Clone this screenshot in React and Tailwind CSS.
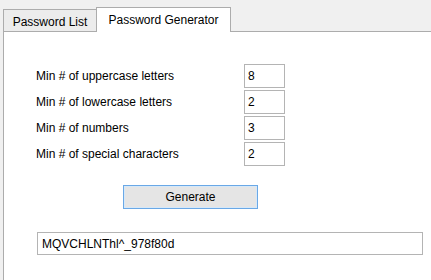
export default function App() {
  const rows = [
    ["Min # of uppercase letters", "8"],
    ["Min # of lowercase letters", "2"],
    ["Min # of numbers", "3"],
    ["Min # of special characters", "2"],
  ];
  return (
    <div
      className="w-[431px] h-[280px] bg-[#f0f0f0] flex flex-col overflow-hidden text-[12px] text-black"
      style={{ fontFamily: '"Liberation Sans", Arial, sans-serif' }}
    >
      <div className="flex items-end pl-[3px] pt-[7px] h-[32px]">
        <div className="h-[22px] w-[93px] border border-b-0 border-r-0 border-[#acacac] bg-[#ececec] flex items-center justify-center pt-[3px] mb-px">
          Password List
        </div>
        <div className="relative z-10 h-[25px] w-[135px] border border-b-0 border-[#acacac] bg-white flex items-center justify-center pb-[1px]">
          Password Generator
        </div>
      </div>
      <div className="flex-1 ml-[3px] -mt-px border-l border-t border-[#acacac] bg-white pl-[33px] pt-[32px]">
        <div className="flex flex-col gap-[2px]">
          {rows.map(([label, val]) => (
            <div key={label} className="flex items-center h-[24px]">
              <div className="w-[208px] -ml-px">{label}</div>
              <div className="w-[41px] h-[24px] border border-[#b4b4b4] flex items-center pl-[3px]">
                {val}
              </div>
            </div>
          ))}
        </div>
        <div className="mt-[19px] ml-[86px] w-[135px] h-[24px] border border-[#6aa8e6] bg-[#e5e5e5] flex items-center justify-center shadow-[inset_0_0_0_1px_#d6e8f8]">
          Generate
        </div>
        <div className="mt-[23px] w-[386px] h-[23px] border border-[#b4b4b4] flex items-center pl-[4px]">
          MQVCHLNThl^_978f80d
        </div>
      </div>
    </div>
  );
}
